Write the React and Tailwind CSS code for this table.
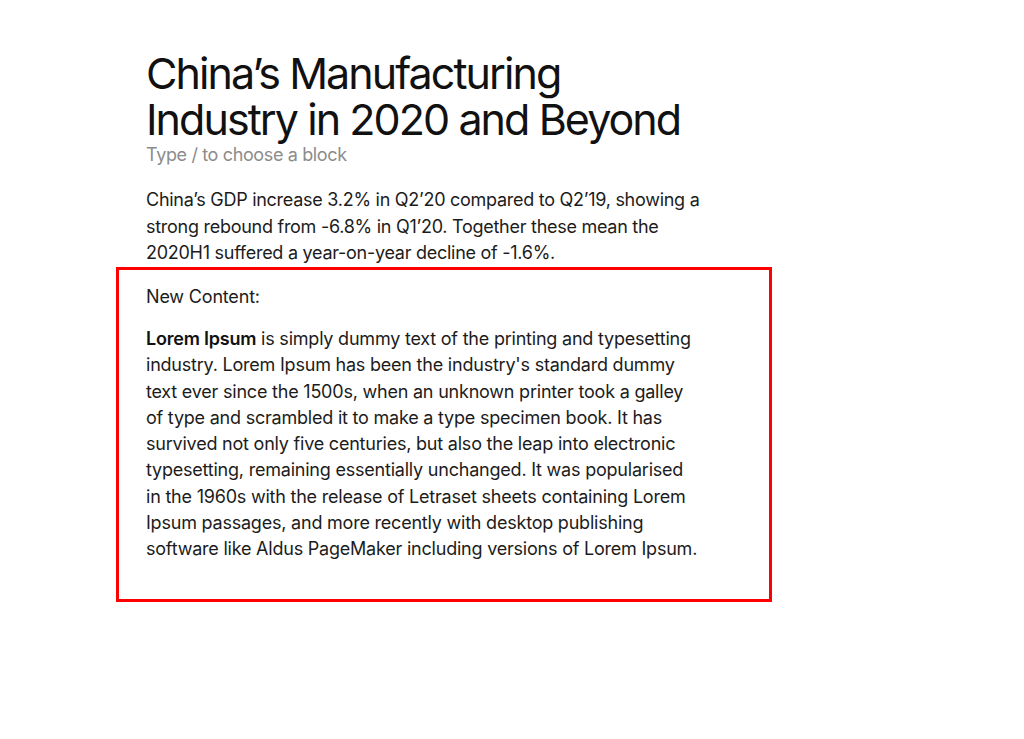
export default function App() {
  const font = { fontFamily: 'Inter, "Noto Sans", sans-serif' };
  return (
    <div className="min-h-screen bg-white text-[#161616]" style={font}>
      <div className="pl-[146px] pt-[50px]">
        <h1 className="w-[560px] text-[43px] leading-[46px] font-normal tracking-[-0.045em] text-[#111]">
          China’s Manufacturing Industry in 2020 and Beyond
        </h1>
        <p className="mt-[1px] text-[18px] leading-[24px] tracking-[-0.02em] text-[#8c8c8c]">
          Type / to choose a block
        </p>
        <p className="mt-[20px] w-[556px] text-[18px] leading-[26.5px] tracking-[-0.015em] text-[#1c1c1c]">
          China’s GDP increase 3.2% in Q2’20 compared to Q2’19, showing a strong rebound from -6.8% in Q1’20. Together these mean the 2020H1 suffered a year-on-year decline of -1.6%.
        </p>
      </div>
      <div className="ml-[116px] h-[335px] w-[656px] border-[3px] border-[#ff0000] pl-[27px] pt-[14px]">
        <p className="text-[18px] leading-[26.5px] tracking-[-0.01em] text-[#1c1c1c]">New Content:</p>
        <p className="mt-[16px] w-[556px] text-[18px] leading-[26.3px] tracking-[-0.012em] text-[#1c1c1c]">
          <span className="font-semibold text-[#111]">Lorem Ipsum</span> is simply dummy text of the printing and typesetting industry. Lorem Ipsum has been the industry's standard dummy text ever since the 1500s, when an unknown printer took a galley of type and scrambled it to make a type specimen book. It has survived not only five centuries, but also the leap into electronic typesetting, remaining essentially unchanged. It was popularised in the 1960s with the release of Letraset sheets containing Lorem Ipsum passages, and more recently with desktop publishing software like Aldus PageMaker including versions of Lorem Ipsum.
        </p>
      </div>
    </div>
  );
}
